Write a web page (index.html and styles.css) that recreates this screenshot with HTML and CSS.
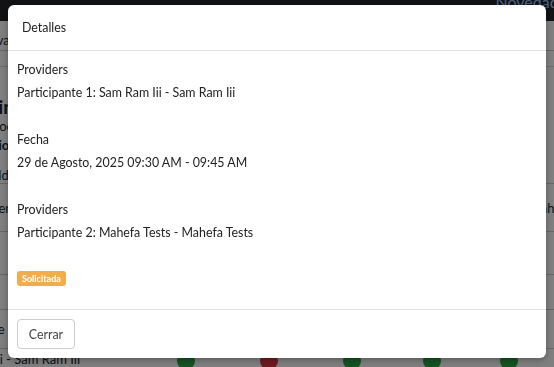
FILE: index.html
```html
<!DOCTYPE html>
<html lang="es">
<head>
  <meta charset="UTF-8">
  <meta name="viewport" content="width=device-width, initial-scale=1.0">
  <title>Detalles</title>
  <link rel="stylesheet" href="styles.css">
</head>
<body>
  <nav class="navbar">
    <span class="nav-link">Novedades</span>
  </nav>

  <div class="page">
    <div class="toolbar">
      <span class="cut cut-w">Nueva</span>
    </div>
    <div class="subtabs"></div>
    <div class="intro">
      <h2 class="cut cut-ng">Listing</h2>
      <p class="cut cut-oc">Proc</p>
      <p class="cut cut-lo strong">Horario</p>
      <p class="cut cut-d">Id</p>
    </div>

    <table class="table">
      <colgroup>
        <col class="c-name"><col class="c-day"><col class="c-day2"><col class="c-day"><col class="c-day3"><col class="c-day4"><col class="c-end">
      </colgroup>
      <thead>
        <tr><th class="cut-er">Provider</th><th></th><th></th><th></th><th></th><th></th><th class="cut-hl">Dahl</th></tr>
      </thead>
      <tbody>
        <tr class="r1"><td></td><td></td><td></td><td></td><td></td><td></td><td></td></tr>
        <tr class="r2"><td></td><td></td><td></td><td></td><td></td><td></td><td></td></tr>
        <tr class="r3"><td class="cut-e">Participante</td><td></td><td></td><td></td><td></td><td></td><td></td></tr>
        <tr class="r4">
          <td class="cut-i">Iii - Sam Ram Iii</td>
          <td><span class="dot ok"></span></td>
          <td><span class="dot no"></span></td>
          <td><span class="dot ok"></span></td>
          <td><span class="dot ok"></span></td>
          <td><span class="dot ok"></span></td>
          <td></td>
        </tr>
      </tbody>
    </table>
  </div>

  <div class="backdrop"></div>

  <div class="modal">
    <div class="modal-header">Detalles</div>
    <div class="modal-body">
      <div class="detail">
        <p>Providers</p>
        <p>Participante 1: Sam Ram Iii - Sam Ram Iii</p>
      </div>
      <div class="detail">
        <p>Fecha</p>
        <p>29 de Agosto, 2025 09:30 AM - 09:45 AM</p>
      </div>
      <div class="detail">
        <p>Providers</p>
        <p>Participante 2: Mahefa Tests - Mahefa Tests</p>
      </div>
      <span class="badge">Solicitada</span>
    </div>
    <div class="modal-footer">
      <button class="btn">Cerrar</button>
    </div>
  </div>
</body>
</html>
```

FILE: styles.css
```css
body {
  margin: 0;
  font-family: Lato, "Open Sans", sans-serif;
  font-size: 13px;
  color: #212529;
  background: #fff;
  overflow: hidden;
}

/* page behind the modal */
.navbar {
  height: 21px;
  background: #212529;
  display: flex;
  justify-content: flex-end;
  overflow: hidden;
}

.nav-link {
  color: #9ec5fe;
  font-size: 16px;
  line-height: 1;
  margin-top: -6px;
  margin-right: -20px;
}

.cut {
  white-space: nowrap;
}

.toolbar {
  height: 30px;
  border-bottom: 1px solid #ccc;
  display: flex;
  align-items: flex-end;
  padding-bottom: 2px;
  box-sizing: border-box;
}

.cut-w {
  margin-left: -27px;
}

.subtabs {
  height: 15px;
  border-bottom: 1px solid #ddd;
  margin-bottom: 9px;
}

.intro {
  height: 107px;
  display: flex;
  flex-direction: column;
}

.intro h2 {
  margin: 20px 0 0 -32px;
  font-size: 19px;
  line-height: 22px;
}

.intro p {
  margin: 0;
  line-height: 16px;
}

.cut-oc {
  margin-left: -13px !important;
}

.cut-lo {
  margin: 3px 0 0 -35px !important;
  font-weight: 700;
}

.cut-d {
  margin: 14px 0 0 -2px !important;
}

.table {
  width: 554px;
  table-layout: fixed;
  border-collapse: collapse;
}

.c-name { width: 145px; }
.c-day { width: 82px; }
.c-day2 { width: 84px; }
.c-day3 { width: 78px; }
.c-day4 { width: 76px; }
.c-end { width: 7px; }

.table th,
.table td {
  border-top: 1px solid #ccc;
  text-align: left;
  padding: 0;
  font-weight: 400;
  white-space: nowrap;
  overflow: visible;
}

.table thead th {
  height: 47px;
  border-bottom: 1px solid #ccc;
}

.r1 td { height: 42px; }
.r2 td { height: 34px; }
.r3 td { height: 38px; }

.r4 td {
  height: 20px;
  vertical-align: top;
  text-align: center;
}

.cut-er { text-indent: -38px; }
.cut-hl { text-indent: -16px; }
.cut-e { text-indent: -64px; }

.r4 td.cut-i {
  text-align: left;
  text-indent: -7px;
  line-height: 20px;
}

.dot {
  display: inline-block;
  width: 18px;
  height: 18px;
  border-radius: 50%;
  margin-top: 3px;
}

.dot.ok {
  background: #28a745;
}

.dot.no {
  background: #dc3545;
}

/* modal */
.backdrop {
  position: fixed;
  inset: 0;
  background: rgba(0, 0, 0, 0.5);
}

.modal {
  position: fixed;
  top: 5px;
  left: 8px;
  width: 538px;
  height: 353px;
  background: #fff;
  border-radius: 6px;
  display: flex;
  flex-direction: column;
  box-shadow: 0 2px 6px rgba(0, 0, 0, 0.3);
  font-size: 12.4px;
  color: #222;
}

.modal-header {
  height: 45px;
  padding: 0 14px;
  display: flex;
  align-items: center;
  border-bottom: 1px solid #dee2e6;
}

.modal-body {
  flex: 1;
  padding: 7px 9px 0;
}

.detail {
  margin-bottom: 24px;
}

.detail p {
  margin: 0;
  line-height: 23px;
}

.badge {
  display: inline-block;
  margin-top: 3px;
  padding: 0 5px;
  height: 15px;
  line-height: 15px;
  font-size: 9px;
  font-weight: 700;
  color: #fff;
  background: #f0ad4e;
  border-radius: 3px;
  vertical-align: top;
}

.modal-footer {
  border-top: 1px solid #dee2e6;
  padding: 9px;
}

.btn {
  width: 58px;
  height: 30px;
  font-family: inherit;
  font-size: 12.4px;
  color: #444;
  background: #fff;
  border: 1px solid #ccc;
  border-radius: 4px;
}
```
